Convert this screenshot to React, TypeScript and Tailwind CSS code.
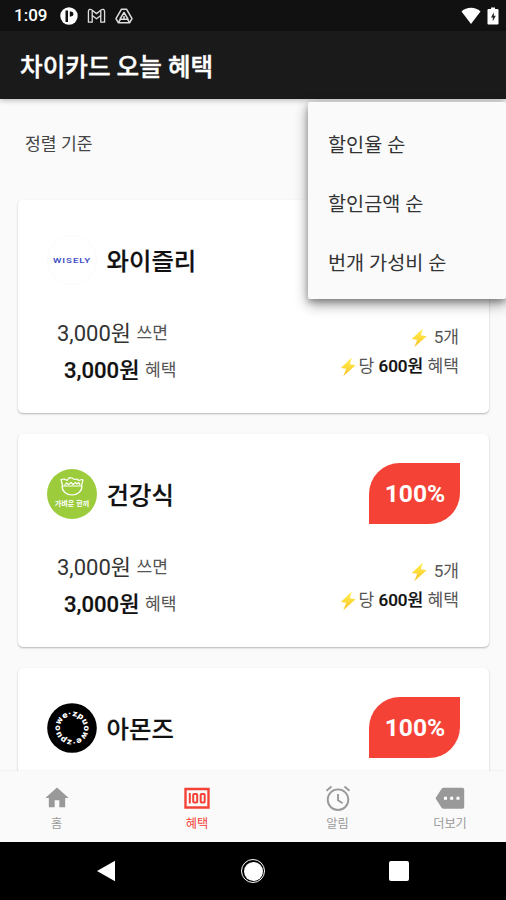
import type { ReactNode } from "react";
import { MdHome } from "react-icons/md";

function Bolt() {
  return (
    <svg viewBox="0 0 18 20" className="h-[20px] w-[18px] shrink-0">
      <defs>
        <linearGradient id="bolt" x1="0" y1="0" x2="0" y2="1">
          <stop offset="0" stopColor="#fff04d" />
          <stop offset="0.5" stopColor="#fddb3a" />
          <stop offset="1" stopColor="#fbc02d" />
        </linearGradient>
      </defs>
      <path d="M12.8.500 1.800 11l5.400.800L4.300 19.300 16.600 8.200l-5.800-.900z" fill="url(#bolt)" />
    </svg>
  );
}

function WiselyLogo() {
  return (
    <div className="flex h-[50px] w-[50px] items-center justify-center rounded-full border border-[#fafafa] bg-white text-[#3f51c5]">
      <svg viewBox="0 0 40 10" className="h-[10px] w-[40px]">
        <text x="1" y="8" fill="currentColor" fontSize="8" fontWeight="600" textLength="38" lengthAdjust="spacingAndGlyphs" letterSpacing="0.8">
          WISELY
        </text>
      </svg>
    </div>
  );
}

function SaladLogo() {
  return (
    <div className="flex h-[50px] w-[50px] flex-col items-center rounded-full bg-[#9ccc3c] pt-[7px]">
      <svg viewBox="0 0 26 20" className="h-[20px] w-[26px]" fill="none" stroke="#fff" strokeWidth="1.200" strokeLinejoin="round">
        <path d="M3 10h20c0 5.500-4.500 9-10 9S3 15.500 3 10z" />
        <path d="M3.500 9.500 2 3.500l3.500-.500 2.500 1.500 2.200-2.800 2.800.3 2.500 1.500 2.500-.500 1.500 1.500 3.500-1 1 .500-1.500 5.500" />
        <path d="m5.500 9.500 2-2.500 2 1.500L12 6.500l2 2 2.500-2 1.500 1.500 2-1.500 1 2.500" />
      </svg>
      <span className="mt-[3px] whitespace-nowrap text-[7.100px] font-bold leading-[10px] text-white">가벼운 한끼</span>
    </div>
  );
}

function AmondzLogo() {
  return (
    <svg viewBox="0 0 50 50" className="h-[50px] w-[50px]">
      <defs>
        <path id="ring" d="M25 13a12 12 0 1 1 0 24a12 12 0 1 1 0-24" />
      </defs>
      <circle cx="25" cy="25" r="24.800" fill="#000" />
      <text fill="#fff" fontSize="8.500" fontWeight="900" textLength="74.500" lengthAdjust="spacingAndGlyphs">
        <textPath href="#ring">zpuowe·zpuowe·</textPath>
      </text>
    </svg>
  );
}

function Card({ logo, name }: { logo: ReactNode; name: string }) {
  return (
    <section className="flex h-[213px] shrink-0 flex-col rounded-[5px] bg-white pr-[29px] pl-[29.500px] shadow-[0_1px_2px_rgba(0,0,0,0.28)]">
      <div className="mt-[28px] flex h-[62px] items-center justify-between">
        <div className="flex items-center gap-[9.500px] pt-px">
          {logo}
          <h2 className="pt-[4px] text-[24.4px] leading-[36px] font-medium text-[#111] [-webkit-text-stroke:0.2px]">{name}</h2>
        </div>
        <div className="flex h-[61px] w-[91px] items-center justify-center rounded-tl-[31px] rounded-br-[31px] bg-[#f44336] pt-[3px] pl-px text-[24.6px] font-bold text-white">
          100%
        </div>
      </div>
      <div className="mt-[25px] flex justify-between text-[17.1px] text-[#555]">
        <div className="pl-[10px]">
          <p className="flex h-[37px] items-center gap-[5.500px]">
            <span className="text-[22px] text-[#333]">3,000원</span>
            <span>쓰면</span>
          </p>
          <p className="flex h-[37px] items-center gap-[5.500px] pl-[7px]">
            <span className="text-[22.1px] font-medium text-[#111] [-webkit-text-stroke:0.2px]">3,000원</span>
            <span>혜택</span>
          </p>
        </div>
        <div className="flex flex-col items-end pt-[8px] pr-px">
          <p className="flex h-[29px] items-center gap-[6px]">
            <Bolt />
            <span>5개</span>
          </p>
          <p className="flex h-[30px] items-center gap-[1px]">
            <Bolt />
            <span>
              당 <b className="font-medium text-[#111] [-webkit-text-stroke:0.2px]">600원</b> 혜택
            </span>
          </p>
        </div>
      </div>
    </section>
  );
}

function StatusBar() {
  return (
    <div className="flex h-[31px] shrink-0 items-center bg-[#111] pr-[7px] pl-[14px] text-white">
      <span className="w-[46px] pt-px text-[17px] font-medium">1:09</span>
      <svg viewBox="0 0 18 18" className="h-[18px] w-[18px]">
        <circle cx="9" cy="9" r="8.700" fill="#fff" />
        <path d="M5.500 3.500h2.500v11.500H5.500zM9.800 4.500H11a2.500 2.500 0 0 1 0 5H9.800z" fill="#111" />
      </svg>
      <svg viewBox="0 0 20 16" className="ml-[9px] h-[16px] w-[19px]" fill="none" stroke="#ddd" strokeWidth="1.400" strokeLinejoin="round">
        <path d="M1.500 14.500V3c0-2 2-2.500 3.300-1.500L10 5.500l5.200-4C16.500.500 18.500 1 18.500 3v11.500h-4V7.500L10 11 5.500 7.500v7z" />
        <path d="M5.500 7.500v-5M14.500 7.500v-5" />
      </svg>
      <svg viewBox="0 0 18 16" className="ml-[9px] h-[16px] w-[18px]" fill="none" stroke="#ddd" strokeWidth="1.500" strokeLinejoin="round">
        <path d="M6.500 1.200h5l5.500 9.500-2.300 4H3.300L1 10.700z" />
        <path d="M9 4.500 5 11.200h8zM3.300 14.700l2-3.200M14.700 14.700l-2-3.200M9 8v2.500" />
      </svg>
      <div className="grow" />
      <svg viewBox="0 0 20 17" className="h-[17px] w-[20px]" fill="#fff">
        <path d="M10 17 .500 4.500C5.500-.500 14.500-.500 19.500 4.500z" />
      </svg>
      <svg viewBox="0 0 12 18" className="ml-[6px] h-[18px] w-[12px]">
        <path d="M1.500 2H4V.500h4V2h2.500q1 0 1 1v13.500q0 1-1 1h-9q-1 0-1-1V3q0-1 1-1z" fill="#fff" />
        <path d="M6.800 5.200 4 10.500h1.800v3.800l3-5.500H6.800z" fill="#222" />
      </svg>
    </div>
  );
}

function HomeIcon() {
  return <MdHome className="h-[28px] w-[28px]" />;
}

function MoneyIcon() {
  return (
    <svg viewBox="0 0 26 28" className="h-[28px] w-[26px]" fill="none" stroke="currentColor" strokeWidth="2">
      <path d="M1.500 5h23v18.500h-23z" strokeWidth="2.400" />
      <path d="M5.800 9v10.500" strokeWidth="2" />
      <rect x="9.200" y="10" width="4" height="8.500" rx="1" />
      <rect x="16.700" y="10" width="4" height="8.500" rx="1" />
    </svg>
  );
}

function AlarmIcon() {
  return (
    <svg viewBox="0 0 26 28" className="h-[28px] w-[26px]" fill="none" stroke="currentColor" strokeWidth="1.900">
      <circle cx="13" cy="15.700" r="10.300" />
      <path d="M13 10v6.200l4.600 3M1.500 6.800l5-4.200M24.500 6.800l-5-4.200" />
    </svg>
  );
}

function MoreIcon() {
  return (
    <svg viewBox="0 0 30 28" className="h-[28px] w-[30px]">
      <path d="M8.500 3.700H27.500q1.700 0 1.700 1.700v17.700q0 1.700-1.700 1.700H8.500q-1.200 0-1.900-1L.500 14.200 6.600 4.700q.7-1 1.900-1z" fill="currentColor" />
      <path d="M9 12.800h3v3H9zM15.200 12.800h3v3h-3zM21.500 12.800h3v3h-3z" fill="#fff" />
    </svg>
  );
}

function NavItem({ icon, label, className }: { icon: ReactNode; label: string; className: string }) {
  return (
    <div className={`flex flex-col items-center pt-[13px] ${className}`}>
      {icon}
      <span className="mt-[3px] text-[12.2px] leading-[18px]">{label}</span>
    </div>
  );
}

export default function App() {
  return (
    <div className="relative flex h-[900px] w-[506px] flex-col overflow-hidden bg-[#fafafa] font-['Roboto','Noto_Sans_CJK_KR',sans-serif]">
      <StatusBar />
      <header className="flex h-[68px] shrink-0 items-center bg-[#1a1a1a] pt-[6px] pl-[20px] shadow-[0_2px_5px_rgba(0,0,0,0.22)]">
        <h1 className="text-[24.6px] font-medium text-white [-webkit-text-stroke:0.4px]">차이카드 오늘 혜택</h1>
      </header>
      <main className="flex h-[672px] shrink-0 flex-col overflow-hidden pr-[17px] pl-[17.500px]">
        <div className="flex h-[101px] shrink-0 items-start pt-[32px] pl-[7.500px] text-[17.2px] leading-[26px] text-[#444]">정렬 기준</div>
        <div className="flex flex-col gap-[21px]">
          <Card logo={<WiselyLogo />} name="와이즐리" />
          <Card logo={<SaladLogo />} name="건강식" />
          <Card logo={<AmondzLogo />} name="아몬즈" />
        </div>
      </main>
      <nav className="flex h-[71px] shrink-0 bg-[#fafafa] text-[#999] shadow-[0_-1px_1px_rgba(0,0,0,0.03)]">
        <NavItem className="w-[113px]" icon={<HomeIcon />} label="홈" />
        <NavItem className="w-[168px] text-[#f44336]" icon={<MoneyIcon />} label="혜택" />
        <NavItem className="w-[113px]" icon={<AlarmIcon />} label="알림" />
        <NavItem className="w-[112px]" icon={<MoreIcon />} label="더보기" />
      </nav>
      <footer className="flex h-[58px] shrink-0 items-center bg-black pl-[96px]">
        <svg viewBox="0 0 20 22" className="h-[22px] w-[20px]">
          <path d="M1 11 19 .800v20.400z" fill="#fff" />
        </svg>
        <div className="ml-[125px] flex h-[24px] w-[24px] items-center justify-center rounded-full border-[1.500px] border-white">
          <div className="h-[19px] w-[19px] rounded-full bg-white" />
        </div>
        <div className="ml-[124px] h-[20px] w-[20px] rounded-[2px] bg-white" />
      </footer>
      <ul className="absolute top-[102px] left-[308px] flex h-[197px] w-[198px] flex-col rounded-[2px] bg-[#fafafa] pt-[11px] pl-[20px] text-[19.700px] text-[#333] shadow-[0_5px_14px_rgba(0,0,0,0.4),0_3px_6px_rgba(0,0,0,0.25)]">
        <li className="flex h-[59px] items-center pt-[7px]">할인율 순</li>
        <li className="flex h-[59px] items-center pt-[7px]">할인금액 순</li>
        <li className="flex h-[59px] items-center pt-[7px]">번개 가성비 순</li>
      </ul>
    </div>
  );
}
